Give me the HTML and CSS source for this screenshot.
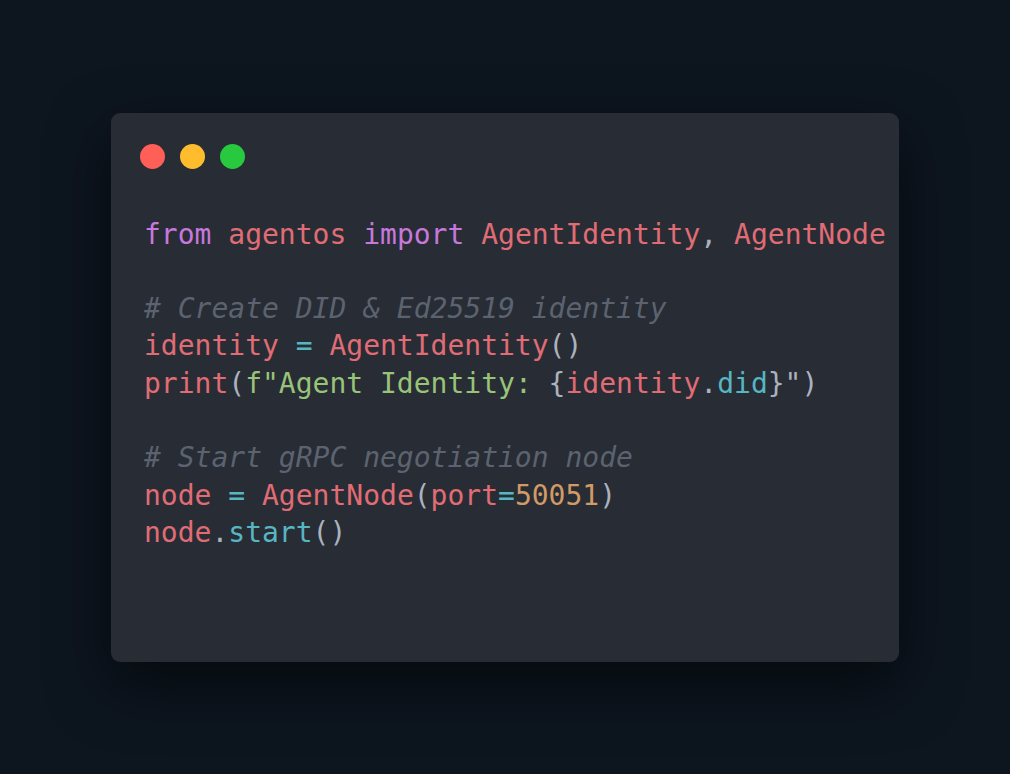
FILE: index.html
```html
<!DOCTYPE html>
<html lang="en">
<head>
<meta charset="utf-8">
<title>AgentOS code</title>
<link rel="stylesheet" href="styles.css">
</head>
<body>
<main class="stage">
  <section class="window">
    <div class="dots">
      <span class="dot red"></span>
      <span class="dot yellow"></span>
      <span class="dot green"></span>
    </div>
<pre class="code"><code><span class="kw">from</span> <span class="id">agentos</span> <span class="kw">import</span> <span class="id">AgentIdentity</span><span class="pn">,</span> <span class="id">AgentNode</span>

<span class="cm"># Create DID &amp; Ed25519 identity</span>
<span class="id">identity</span> <span class="op">=</span> <span class="id">AgentIdentity</span><span class="pn">()</span>
<span class="id">print</span><span class="pn">(</span><span class="st">f"Agent Identity: </span><span class="pn">{</span><span class="id">identity</span><span class="pn">.</span><span class="fn">did</span><span class="pn">}"</span><span class="pn">)</span>

<span class="cm"># Start gRPC negotiation node</span>
<span class="id">node</span> <span class="op">=</span> <span class="id">AgentNode</span><span class="pn">(</span><span class="id">port</span><span class="op">=</span><span class="nu">50051</span><span class="pn">)</span>
<span class="id">node</span><span class="pn">.</span><span class="fn">start</span><span class="pn">()</span></code></pre>
  </section>
</main>
</body>
</html>
```

FILE: styles.css
```css
html, body {
  margin: 0;
  padding: 0;
  height: 100%;
}

body {
  background: #0d151f;
  font-family: "DejaVu Sans Mono", monospace;
}

.stage {
  height: 100%;
  display: flex;
  align-items: center;
  justify-content: center;
}

.window {
  box-sizing: border-box;
  width: 788px;
  height: 549px;
  background: #282c34;
  border-radius: 9px;
  padding: 31px 28px;
  box-shadow: 0 22px 60px rgba(0, 0, 0, 0.55);
}

.dots {
  display: flex;
  gap: 15px;
  padding-left: 1px;
}

.dot {
  width: 25px;
  height: 25px;
  border-radius: 50%;
}

.red { background: #ff5f56; }
.yellow { background: #ffbd2e; }
.green { background: #27c93f; }

.code {
  margin: 47px 0 0;
  padding-left: 5px;
  font-family: "DejaVu Sans Mono", monospace;
  font-size: 28px;
  line-height: 37.3px;
  color: #abb2bf;
  white-space: pre;
}

.kw { color: #c678dd; }
.id { color: #e06c75; }
.pn { color: #abb2bf; }
.op { color: #56b6c2; }
.fn { color: #56b6c2; }
.st { color: #98c379; }
.nu { color: #d19a66; }
.cm { color: #5c6370; font-style: italic; }
```
